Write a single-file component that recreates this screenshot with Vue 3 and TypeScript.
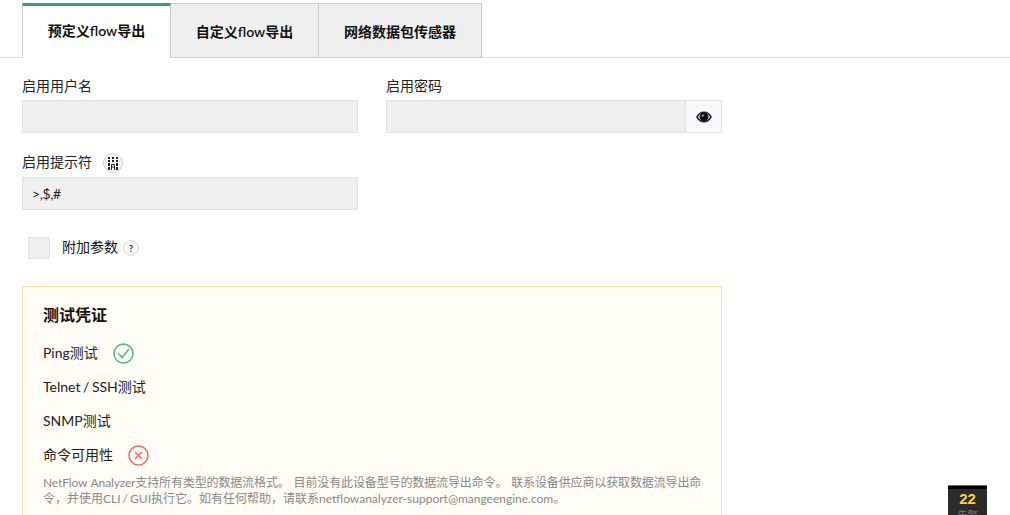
<script setup lang="ts">
const tabs: string[] = ['预定义flow导出', '自定义flow导出', '网络数据包传感器']
</script>

<template>
  <div class="page">
    <div class="tabs">
      <div v-for="(t, i) in tabs" :key="t" class="tab" :class="{ active: i === 0 }">{{ t }}</div>
    </div>

    <div class="form">
      <div class="grid">
        <div class="field">
          <label class="lbl">启用用户名</label>
          <div class="input"></div>
        </div>
        <div class="field">
          <label class="lbl">启用密码</label>
          <div class="group">
            <div class="input grow"></div>
            <div class="addon">
              <svg width="16" height="12" viewBox="0 0 16 12">
                <path d="M0 6C2.200 2.200 5 0.500 8 0.500s5.800 1.700 8 5.500c-2.200 3.800-5 5.500-8 5.500S2.200 9.800 0 6z" fill="#222" />
                <path d="M1.800 6C3.300 3.800 4.800 2.700 6 2.200A4.200 4.200 0 0 0 6 9.800C4.800 9.300 3.300 8.200 1.800 6z" fill="#ccc" />
                <path d="M14.200 6C12.700 3.800 11.200 2.700 10 2.200A4.200 4.200 0 0 1 10 9.800C11.200 9.300 12.700 8.200 14.200 6z" fill="#ccc" />
                <circle cx="8" cy="6" r="3.800" fill="#111" />
                <circle cx="6.800" cy="4.600" r="1.100" fill="#aaa" />
              </svg>
            </div>
          </div>
        </div>
      </div>

      <div class="field prompt">
        <div class="lbl-row">
          <label class="lbl">启用提示符</label>
          <span class="hint big">
            <svg width="10" height="13" viewBox="0 0 10 13" fill="#222">
              <rect x="0" y="0" width="2" height="2" /><rect x="4" y="0" width="2" height="2" /><rect x="8" y="0" width="2" height="2" />
              <rect x="0" y="3" width="2" height="2" /><rect x="4" y="3" width="2" height="2" /><rect x="8" y="3" width="2" height="2" />
              <rect x="0" y="6" width="2" height="3" /><rect x="8" y="6" width="2" height="3" />
              <rect x="0" y="10" width="2" height="3" /><rect x="8" y="10" width="2" height="3" />
              <path d="M3.500 13V7.500h3v5.500M3.500 10h3" fill="none" stroke="#222" stroke-width="1" />
            </svg>
          </span>
        </div>
        <div class="input text">&gt;,$,#</div>
      </div>

      <div class="check-row">
        <span class="checkbox"></span>
        <span class="check-lbl">附加参数</span>
        <span class="hint small">?</span>
      </div>

      <div class="card">
        <h3 class="card-title">测试凭证</h3>
        <div class="row">
          <span>Ping测试</span>
          <svg class="status" width="21" height="21" viewBox="0 0 21 21" fill="none" stroke="#4fb683" stroke-width="1.500">
            <circle cx="10.500" cy="10.500" r="9.500" />
            <path d="M5.500 10.500l3.500 4 7-8.500" />
          </svg>
        </div>
        <div class="row"><span>Telnet / SSH测试</span></div>
        <div class="row"><span>SNMP测试</span></div>
        <div class="row">
          <span>命令可用性</span>
          <svg class="status" width="21" height="21" viewBox="0 0 21 21" fill="none" stroke="#f0696b" stroke-width="1.500">
            <circle cx="10.500" cy="10.500" r="9.500" />
            <path d="M7 7l7 7M14 7l-7 7" />
          </svg>
        </div>
        <div class="note">
          <div class="note-line first">NetFlow Analyzer支持所有类型的数据流格式。 目前没有此设备型号的数据流导出命令。 联系设备供应商以获取数据流导出命</div>
          <div class="note-line">令，并使用CLI / GUI执行它。如有任何帮助，请联系netflowanalyzer-support@mangeengine.com。</div>
        </div>
      </div>
    </div>

    <div class="alarm">
      <div class="alarm-bar"></div>
      <div class="alarm-num">22</div>
      <div class="alarm-lbl">告警</div>
    </div>
  </div>
</template>

<style>
html, body { margin: 0; background: #fff; overflow: hidden; }
</style>

<style scoped>
.page {
  height: 515px;
  overflow: hidden;
  box-sizing: border-box;
  padding-top: 3px;
  font-family: Lato, "Noto Sans CJK SC", sans-serif;
  font-size: 14px;
  color: #222;
}
.tabs {
  display: flex;
  padding-left: 22px;
  height: 54px;
  border-bottom: 1px solid #dcdcdc;
}
.tab {
  box-sizing: border-box;
  height: 55px;
  width: 148px;
  background: #efefef;
  border: 1px solid #ccc;
  border-left: 0;
  font-size: 14px;
  font-weight: 600;
  color: #111;
  display: flex;
  align-items: center;
  justify-content: center;
}
.tab:last-child { width: 163px; }
.tab.active {
  width: 149px;
  background: #fff;
  border: 0;
  border-left: 1px solid #ccc;
  border-right: 1px solid #ccc;
  border-top: 3px solid #2ea56f;
  padding-bottom: 4px;
}
.form {
  width: 700px;
  margin-left: 22px;
  padding-top: 19px;
}
.grid {
  display: grid;
  grid-template-columns: 336px 336px;
  gap: 28px;
}
.lbl {
  display: block;
  font-size: 14px;
  line-height: 17px;
  color: #222;
}
.field .lbl { margin-bottom: 6px; }
.input {
  box-sizing: border-box;
  height: 33px;
  background: #efefef;
  border: 1px solid #e2e2e2;
}
.input.text {
  padding-left: 9px;
  line-height: 31px;
  font-size: 14px;
  letter-spacing: -0.4px;
}
.group { display: flex; }
.grow { flex: 1; }
.addon {
  box-sizing: border-box;
  width: 36px;
  height: 33px;
  background: #f8f8fa;
  border: 1px solid #e2e2e2;
  border-left: 0;
  display: flex;
  align-items: center;
  justify-content: center;
}
.prompt { width: 336px; margin-top: 19px; }
.lbl-row {
  display: flex;
  align-items: center;
  gap: 11px;
  height: 20px;
  margin-bottom: 5px;
}
.field .lbl-row .lbl { margin-bottom: 2px; }
.hint {
  box-sizing: border-box;
  flex: none;
  border-radius: 50%;
  background: #f8f8f8;
  border: 1px solid #d8d8d8;
  display: inline-flex;
  align-items: center;
  justify-content: center;
}
.hint.big { width: 20px; height: 20px; margin-top: 2px; background: #f4f4f4; border: 1px solid #cfcfcf; }
.hint.small { width: 16px; height: 16px; font-size: 10px; font-weight: 700; margin: 0 0 1px 5px; color: #333; }
.check-row {
  display: flex;
  align-items: center;
  margin-top: 27px;
  padding-left: 6px;
  height: 22px;
}
.checkbox {
  box-sizing: border-box;
  width: 22px;
  height: 22px;
  background: #efefef;
  border: 1px solid #e2e2e2;
  margin-right: 12px;
}
.check-lbl { font-size: 14px; color: #111; margin-bottom: 4px; }
.card {
  box-sizing: border-box;
  margin-top: 27px;
  height: 260px;
  background: #fffdf6;
  border: 1px solid #fde6a5;
  padding: 17px 14px 0 20px;
}
.card-title {
  margin: 0 0 10px;
  font-size: 16px;
  line-height: 22px;
  font-weight: 700;
  color: #111;
}
.row {
  display: flex;
  align-items: center;
  height: 34px;
  font-size: 14px;
  color: #222;
  word-spacing: -1px;
}
.row span { margin-bottom: 2px; }
.status { margin-left: 15px; }
.note {
  padding-top: 3px;
  font-size: 12px;
  line-height: 16px;
  color: #888;
}
.note-line { white-space: nowrap; word-spacing: -1px; }
.note-line.first { word-spacing: 1px; letter-spacing: -0.13px; }
.alarm {
  position: absolute;
  left: 948px;
  top: 485px;
  width: 39px;
  height: 30px;
  box-sizing: border-box;
  background: #2b2b2b;
  border-top: 1px solid #666;
  overflow: hidden;
  text-align: center;
}
.alarm-bar { height: 3px; background: #000; }
.alarm-num {
  font-family: "Liberation Sans", sans-serif;
  font-size: 15px;
  font-weight: 700;
  line-height: 20px;
  color: #f6d63a;
}
.alarm-lbl { font-size: 10px; line-height: 12px; color: #777; }
</style>
